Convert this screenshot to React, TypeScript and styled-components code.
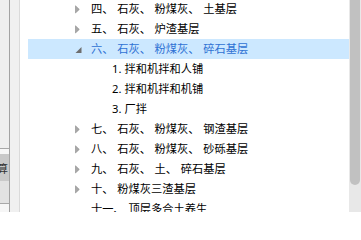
import styled, { createGlobalStyle } from "styled-components";

type Toggle = "open" | "closed" | "none";

type Node = {
  label: string;
  level?: number;
  toggle?: Toggle;
  selected?: boolean;
};

const nodes: Node[] = [
  { label: "四、石灰、粉煤灰、土基层", toggle: "closed" },
  { label: "五、石灰、炉渣基层", toggle: "closed" },
  { label: "六、石灰、粉煤灰、碎石基层", toggle: "open", selected: true },
  { label: "1. 拌和机拌和人铺", level: 1 },
  { label: "2. 拌和机拌和机铺", level: 1 },
  { label: "3. 厂拌", level: 1 },
  { label: "七、石灰、粉煤灰、钢渣基层", toggle: "closed" },
  { label: "八、石灰、粉煤灰、砂砾基层", toggle: "closed" },
  { label: "九、石灰、土、碎石基层", toggle: "closed" },
  { label: "十、粉煤灰三渣基层", toggle: "closed" },
  { label: "十一、顶层多合土养生" },
];

const GlobalStyle = createGlobalStyle`
  html, body {
    margin: 0;
    padding: 0;
    background: #ffffff;
    overflow: hidden;
  }
`;

const Frame = styled.div`
  display: flex;
  width: 361px;
  height: 212px;
  overflow: hidden;
  font-family: "Noto Sans", "Noto Sans CJK SC", sans-serif;
  font-size: 11.25px;
  color: #000;
`;

const SidePane = styled.div`
  display: flex;
  flex-direction: column;
  flex: 0 0 9px;
  width: 9px;
  min-width: 0;
  overflow: hidden;
  border-right: 1px solid #a3a3a3;
  background: #f0f0f0;
`;

const SideBlock = styled.div<{ $h?: number; $bg: string; $line?: boolean }>`
  flex: ${(p) => (p.$h ? `0 0 ${p.$h}px` : "1")};
  background: ${(p) => p.$bg};
  border-bottom: ${(p) => (p.$line ? "1px solid #a8a8a8" : "none")};
`;

const SideTab = styled.div`
  flex: 0 0 27px;
  display: flex;
  align-items: center;
  justify-content: flex-end;
  overflow: hidden;
  background: #c9c9c9;
  color: #333;
  white-space: nowrap;
  padding-right: 1px;
`;

const Gutter = styled.div`
  flex: 0 0 9px;
  background: #f0f0f0;
  border-right: 1px solid #dadada;
`;

const TreePane = styled.div`
  flex: 1;
  min-width: 0;
  display: flex;
  flex-direction: column;
  margin-top: -1px;
  padding-left: 8px;
  overflow: hidden;
`;

const Row = styled.div<{ $level: number; $selected?: boolean }>`
  flex: 0 0 20px;
  display: flex;
  align-items: center;
  padding-left: ${(p) => 47 + p.$level * 21}px;
  background: ${(p) => (p.$selected ? "#cce8ff" : "transparent")};
  color: ${(p) => (p.$selected ? "#2f72d4" : "#000")};
  white-space: nowrap;
`;

const ToggleBox = styled.span`
  flex: 0 0 16px;
  height: 20px;
  display: block;

  & svg {
    display: block;
  }
`;

const Label = styled.span`
  line-height: 20px;
`;

const Sep = styled.span`
  margin-right: 3.6px;
`;

const Scrollbar = styled.div`
  flex: 0 0 11px;
  display: flex;
  background: #e8e8e8;
  padding-left: 1.5px;
`;

const Thumb = styled.div`
  width: 9.5px;
  height: 185px;
  background: #c1c1c1;
  border-radius: 0 0 5px 5px;
`;

function ToggleIcon({ state }: { state: Toggle }) {
  if (state === "none") return <ToggleBox />;
  return (
    <ToggleBox>
      <svg width="16" height="20" viewBox="0 0 16 20">
        {state === "open" ? (
          <polygon points="6.5,8 6.5,14 0.5,14" fill="#6e6e6e" />
        ) : (
          <polygon
            points="0.5,6.8 4.3,10.4 0.5,14"
            fill="#a8a8a8"
            stroke="#8c8c8c"
            strokeWidth="0.6"
          />
        )}
      </svg>
    </ToggleBox>
  );
}

function NodeLabel({ text }: { text: string }) {
  const parts = text.split("、");
  return (
    <Label>
      {parts.map((part, i) => (
        <span key={i}>
          {part}
          {i < parts.length - 1 && <Sep>、</Sep>}
        </span>
      ))}
    </Label>
  );
}

export default function App() {
  return (
    <>
      <GlobalStyle />
      <Frame>
        <SidePane>
          <SideBlock $h={148} $bg="#efefef" $line />
          <SideBlock $h={5} $bg="#f7f7f7" />
          <SideTab>预算</SideTab>
          <SideBlock $h={22} $bg="#e2e2e2" $line />
          <SideBlock $bg="#f6f6f6" />
        </SidePane>
        <Gutter />
        <TreePane>
          {nodes.map((n) => (
            <Row key={n.label} $level={n.level ?? 0} $selected={n.selected}>
              <ToggleIcon state={n.toggle ?? "none"} />
              <NodeLabel text={n.label} />
            </Row>
          ))}
        </TreePane>
        <Scrollbar>
          <Thumb />
        </Scrollbar>
      </Frame>
    </>
  );
}
